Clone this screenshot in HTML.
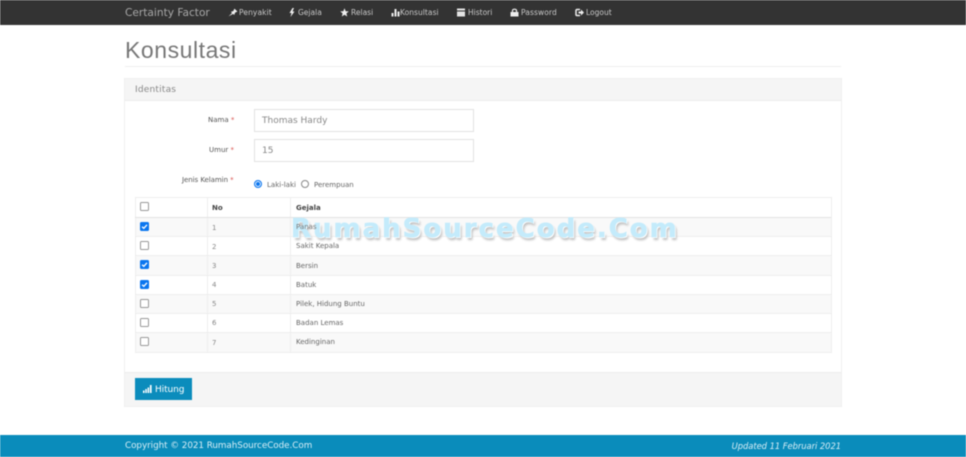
<!DOCTYPE html>
<html><head><meta charset="utf-8"><style>
html,body{margin:0;padding:0;background:#fff}
#p{position:relative;width:966px;height:457px;overflow:hidden;background:#fff;font-family:"DejaVu Sans","Liberation Sans",sans-serif;filter:blur(.4px)}
#p div,#p span.t,#p svg{position:absolute}
.t{position:absolute;white-space:nowrap;line-height:12px}
.n{font-size:7.5px;color:#c8c8c8;top:7px}
.l{font-size:7px;color:#555;text-align:right}
.c{font-size:7px;color:#666}
.in{left:254px;width:218px;height:21px;border:1px solid #e2e2e2;background:#fff}
.cb{left:140px;width:7px;height:7px;border:1px solid #999;border-radius:1.5px;background:#fff}
.on{border-color:#0b76ef;background:#0b76ef}
.ln{left:135px;width:696px;height:1px;background:#eee}
.st{left:135px;width:696px;height:19px;background:#f9f9f9}
</style></head><body><div id="p">
<div style="left:0;top:0;width:966px;height:25px;background:#333"></div>
<span class="t" style="left:125px;top:7px;font-size:10.6px;color:#a8a8a8">Certainty Factor</span>

<svg style="left:228px;top:8px" width="10" height="9" viewBox="0 0 9 8"><path d="M.5 7.5L3.6 4.4L2.6 3.4L4.8 2.6L5.8 .5L8.5 3.1L6.4 4.1L5.6 6.2L4.6 5.2Z" fill="#eee"/></svg>
<span class="t n" style="left:239px;letter-spacing:.1px">Penyakit</span>
<svg style="left:289px;top:8px" width="6" height="9" viewBox="0 0 6 9"><path d="M3.5 0L.5 5H2.5L1.5 9L5.5 3.5H3.5L5 0Z" fill="#eee"/></svg>
<span class="t n" style="left:298px">Gejala</span>
<svg style="left:340px;top:8px" width="9" height="9" viewBox="0 0 9 9"><path d="M4.5 .3L5.7 3.2L8.8 3.4L6.4 5.4L7.2 8.5L4.5 6.8L1.8 8.5L2.6 5.4L.2 3.4L3.3 3.2Z" fill="#eee"/></svg>
<span class="t n" style="left:351px">Relasi</span>
<svg style="left:391px;top:8px" width="9" height="9" viewBox="0 0 9 9"><path d="M.5 5H2.5V8.5H.5ZM3.5 1H5.5V8.5H3.5ZM6.5 3.5H8.5V8.5H6.5Z" fill="#eee"/></svg>
<span class="t n" style="left:400px;letter-spacing:.05px">Konsultasi</span>
<svg style="left:457px;top:8px" width="8" height="9" viewBox="0 0 8 9"><path d="M0 .5H8V2.5H0ZM0 3.5H8V8.5H0Z" fill="#e4e4e4"/></svg>
<span class="t n" style="left:468px">Histori</span>
<svg style="left:510px;top:8px" width="9" height="9" viewBox="0 0 9 9"><path d="M.5 4H8.5V8.5H.5Z" fill="#eee"/><path d="M2.5 4V2.5C2.5 .8 6.5 .8 6.5 2.5V4" fill="none" stroke="#eee" stroke-width="1.2"/></svg>
<span class="t n" style="left:521px;letter-spacing:.1px">Password</span>
<svg style="left:575px;top:8px" width="9" height="9" viewBox="0 0 9 9"><path d="M5 1.5H2A1 1 0 0 0 1 2.5V6.5A1 1 0 0 0 2 7.5H5" fill="none" stroke="#eee" stroke-width="1.5"/><path d="M3.5 3.5H6V1.5L9 4.5L6 7.5V5.5H3.5Z" fill="#eee"/></svg>
<span class="t n" style="left:586px">Logout</span>

<span class="t" style="left:125px;top:36px;font-size:23px;line-height:28px;color:#777;font-family:'Liberation Sans',sans-serif;letter-spacing:.55px">Konsultasi</span>
<div style="left:125px;top:66px;width:716px;height:1px;background:#eee"></div>

<div style="left:124px;top:78px;width:716px;height:327px;border:1px solid #efefef;background:#fff"></div>
<div style="left:125px;top:79px;width:716px;height:21px;background:#f5f5f5;border-bottom:1px solid #ececec"></div>
<span class="t" style="left:135px;top:84px;font-size:9px;color:#888;letter-spacing:.2px">Identitas</span>

<span class="t l" style="left:208px;top:114px">Nama <span style="color:#d9534f">*</span></span>
<div class="in" style="top:109px"></div>
<span class="t" style="left:262px;top:115px;font-size:9px;color:#888">Thomas Hardy</span>
<span class="t l" style="left:209px;top:144px">Umur <span style="color:#d9534f">*</span></span>
<div class="in" style="top:139px"></div>
<span class="t" style="left:262px;top:145px;font-size:9px;color:#888">15</span>
<span class="t l" style="left:182px;top:174px;letter-spacing:-.05px">Jenis Kelamin <span style="color:#d9534f">*</span></span>

<div style="left:254px;top:180px;width:6px;height:6px;border:1px solid #0b76ef;border-radius:50%;background:#0b76ef;box-shadow:inset 0 0 0 1px #fff"></div>
<span class="t c" style="left:267px;top:179px">Laki-laki</span>
<div style="left:301px;top:180px;width:6px;height:6px;border:1px solid #888;border-radius:50%;background:#fff"></div>
<span class="t c" style="left:314px;top:179px">Perempuan</span>

<div class="st" style="top:217px"></div>
<div class="st" style="top:256px"></div>
<div class="st" style="top:294px"></div>
<div class="st" style="top:333px"></div>
<div style="left:135px;top:197px;width:695px;height:154px;border:1px solid #eee"></div>
<div style="left:207px;top:197px;width:1px;height:155px;background:#eee"></div>
<div style="left:290px;top:197px;width:1px;height:155px;background:#eee"></div>
<div class="ln" style="top:217px;background:#e2e2e2"></div>
<div class="ln" style="top:236px"></div>
<div class="ln" style="top:255px"></div>
<div class="ln" style="top:275px"></div>
<div class="ln" style="top:294px"></div>
<div class="ln" style="top:313px"></div>
<div class="ln" style="top:332px"></div>

<span class="t" style="left:291px;top:214px;font-size:26px;line-height:30px;font-weight:bold;color:#c4ebfb;letter-spacing:2px;-webkit-text-stroke:.6px #c4ebfb;text-shadow:1px 1px 0 #fff,2px 3px 2px #c0c0c0">RumahSourceCode.Com</span>

<div class="cb" style="top:202px"></div>
<span class="t" style="left:212px;top:202px;font-size:7px;font-weight:bold;color:#444">No</span>
<span class="t" style="left:296px;top:202px;font-size:7px;font-weight:bold;color:#444">Gejala</span>

<div class="cb on" style="top:222px"></div><svg style="left:141px;top:223px" width="7" height="7" viewBox="0 0 7 7"><path d="M1 3.8L2.8 5.3L6 1.8" fill="none" stroke="#fff" stroke-width="1.3"/></svg>
<div class="cb" style="top:241px"></div>
<div class="cb on" style="top:260px"></div><svg style="left:141px;top:261px" width="7" height="7" viewBox="0 0 7 7"><path d="M1 3.8L2.8 5.3L6 1.8" fill="none" stroke="#fff" stroke-width="1.3"/></svg>
<div class="cb on" style="top:280px"></div><svg style="left:141px;top:281px" width="7" height="7" viewBox="0 0 7 7"><path d="M1 3.8L2.8 5.3L6 1.8" fill="none" stroke="#fff" stroke-width="1.3"/></svg>
<div class="cb" style="top:299px"></div>
<div class="cb" style="top:318px"></div>
<div class="cb" style="top:337px"></div>

<span class="t c" style="left:212px;top:222px;color:#888">1</span><span class="t c" style="left:296px;top:221px;color:#777">Panas</span>
<span class="t c" style="left:212px;top:241px;color:#888">2</span><span class="t c" style="left:296px;top:240px">Sakit Kepala</span>
<span class="t c" style="left:212px;top:260px;color:#888">3</span><span class="t c" style="left:296px;top:260px">Bersin</span>
<span class="t c" style="left:212px;top:279px;color:#888">4</span><span class="t c" style="left:296px;top:279px">Batuk</span>
<span class="t c" style="left:212px;top:298px;color:#888">5</span><span class="t c" style="left:296px;top:298px">Pilek, Hidung Buntu</span>
<span class="t c" style="left:212px;top:317px;color:#888">6</span><span class="t c" style="left:296px;top:317px">Badan Lemas</span>
<span class="t c" style="left:212px;top:337px;color:#888">7</span><span class="t c" style="left:296px;top:336px">Kedinginan</span>

<div style="left:125px;top:372px;width:716px;height:33px;background:#f5f5f5;border-top:1px solid #ececec"></div>
<div style="left:135px;top:378px;width:57px;height:22px;background:#0b8cbc"></div>
<svg style="left:143px;top:384px" width="10" height="9" viewBox="0 0 10 9"><path d="M0 6.5H1.5V9H0ZM2.3 5H3.8V9H2.3ZM4.6 3.5H6.1V9H4.6ZM6.9 1H8.6V9H6.9Z" fill="#fff"/></svg>
<span class="t" style="left:155px;top:384px;font-size:9px;color:#fff;letter-spacing:-.1px">Hitung</span>

<div style="left:0;top:435px;width:966px;height:22px;background:#0a8cbb"></div>
<span class="t" style="left:125px;top:440px;font-size:8.8px;color:#d8eef6;letter-spacing:-.05px">Copyright © 2021 RumahSourceCode.Com</span>
<span class="t" style="right:125px;top:440px;font-size:8.4px;font-style:italic;color:#d8eef6;letter-spacing:-.05px">Updated 11 Februari 2021</span>
</div></body></html>
